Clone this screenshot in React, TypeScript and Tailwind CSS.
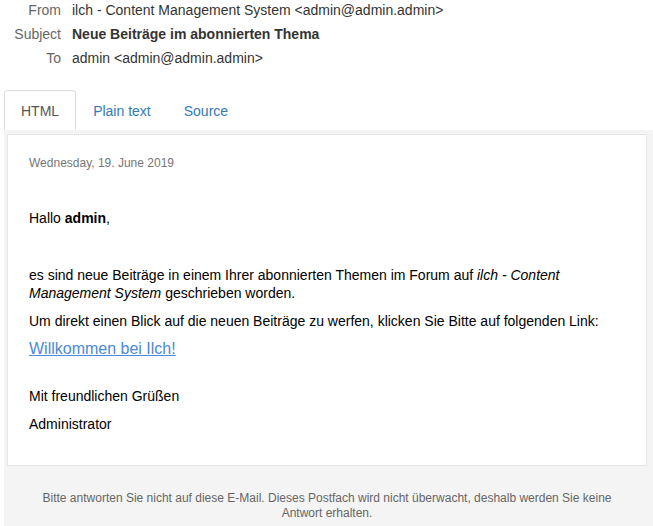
const rows = [
  { label: "From", value: "ilch - Content Management System <admin@admin.admin>", bold: false },
  { label: "Subject", value: "Neue Beiträge im abonnierten Thema", bold: true },
  { label: "To", value: "admin <admin@admin.admin>", bold: false },
]

const tabs = ["HTML", "Plain text", "Source"]

function App() {
  return (
    <main className="w-[653px] h-[526px] overflow-hidden bg-white font-['Liberation_Sans',Arial,sans-serif] text-[14px]">
      <section className="flex flex-col gap-[4px]">
        {rows.map((row) => (
          <div key={row.label} className="flex h-[20px] items-center leading-[20px]">
            <span className="w-[61px] text-right text-[#666]">{row.label}</span>
            <span className={`ml-[11px] text-[#333] ${row.bold ? "font-bold" : ""}`}>{row.value}</span>
          </div>
        ))}
      </section>

      <nav className="mt-[22px] ml-[4px] flex">
        {tabs.map((tab, i) => (
          <div
            key={tab}
            className={`h-[40px] leading-[40px] border rounded-t ${
              i === 0 ? "px-4 border-[#ddd] border-b-0 bg-white text-[#555]" : "border-transparent text-[#337ab7]"
            } ${i === 1 ? "px-4" : ""} ${i === 2 ? "pl-[15px] pr-4" : ""}`}
          >
            {tab}
          </div>
        ))}
      </nav>

      <div className="ml-[4px] bg-[#f4f4f4] pt-[4px] pl-[3px] pr-[6px] h-[400px]">
        <article className="bg-white border border-[#e6e6e6] px-[21px] pt-[19px] pb-[32px] text-black">
          <p className="text-[12px] leading-[18px] text-[#777]">Wednesday, 19. June 2019</p>
          <p className="mt-[36px] leading-[20px]">
            Hallo <b>admin</b>,
          </p>
          <p className="mt-[38px] leading-[18px]">
            es sind neue Beiträge in einem Ihrer abonnierten Themen im Forum auf <i>ilch - Content Management System</i> geschrieben worden.
          </p>
          <p className="mt-[10px] leading-[18px]">
            Um direkt einen Blick auf die neuen Beiträge zu werfen, klicken Sie Bitte auf folgenden Link:
          </p>
          <p className="mt-[9px] text-[16px] leading-[20px]">
            <a href="#" className="text-[#4a88dc] underline">Willkommen bei Ilch!</a>
          </p>
          <p className="mt-[28px] leading-[18px]">Mit freundlichen Grüßen</p>
          <p className="mt-[10px] leading-[18px]">Administrator</p>
        </article>
        <p className="mx-auto mt-[25px] max-w-[590px] text-center text-[12px] leading-[15px] text-[#666]">
          Bitte antworten Sie nicht auf diese E-Mail. Dieses Postfach wird nicht überwacht, deshalb werden Sie keine Antwort erhalten.
        </p>
      </div>
    </main>
  )
}

export default App
